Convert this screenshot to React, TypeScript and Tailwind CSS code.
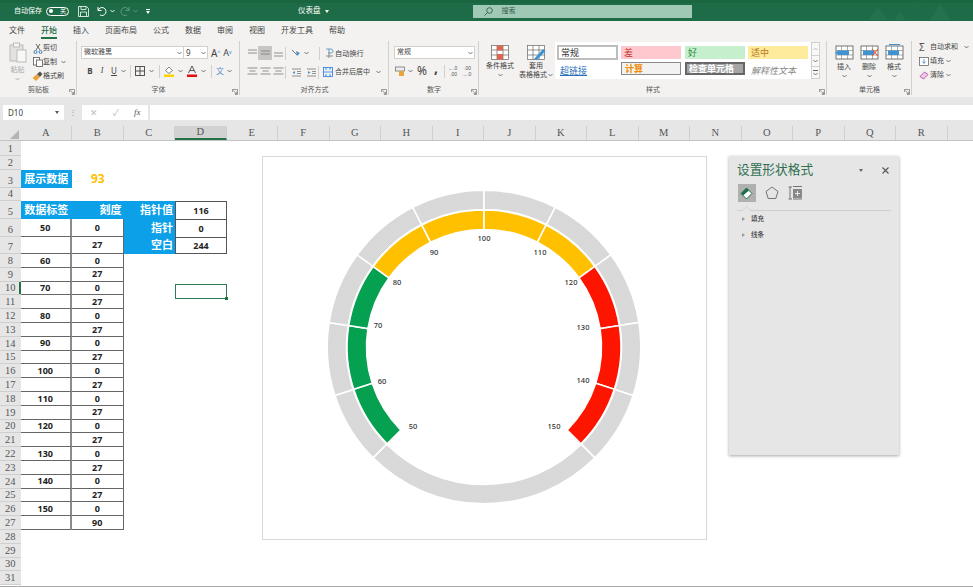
import type { ReactNode } from "react";

function Chev({ className = "" }: { className?: string }) {
  return (
    <svg className={"w-[5px] h-[4px] shrink-0 " + className} viewBox="0 0 5 4" fill="none" stroke="#666" strokeWidth="0.9">
      <path d="M0.5 1 L2.5 3 L4.5 1" />
    </svg>
  );
}

function Launcher() {
  return (
    <svg className="absolute right-[2px] bottom-[2px] w-[6px] h-[6px]" viewBox="0 0 6 6" fill="none" stroke="#777" strokeWidth="0.7">
      <path d="M0.5 3 V0.5 H5.5 V5.5 H3 M1 1.2 L4.6 4.8 M4.6 2.8 V4.8 H2.6" />
    </svg>
  );
}

function Group({ label, className, children }: { label: string; className: string; children: ReactNode }) {
  return (
    <div className={"relative flex flex-col shrink-0 " + className}>
      <div className="flex-1 min-h-0">{children}</div>
      <div className="h-[13px] mb-[1px] text-center text-[7px] leading-[13px] text-[#555]">{label}</div>
      <Launcher />
      <div className="absolute right-0 top-[3px] bottom-[2px] w-px bg-[#d2d0ce]" />
    </div>
  );
}

function Lines({ rows }: { rows: [number, number][] }) {
  return (
    <svg className="w-[11px] h-[10px]" viewBox="0 0 11 10" stroke="#777" strokeWidth="0.8">
      {rows.map(([y, w], i) => <line key={i} x1={(11 - w) / 2} x2={(11 + w) / 2} y1={y} y2={y} />)}
    </svg>
  );
}

function Sep({ className = "" }: { className?: string }) {
  return <div className={"w-px h-[13px] bg-[#d2d0ce] shrink-0 " + className} />;
}

function CellIcon({ kind }: { kind: "insert" | "delete" | "format" }) {
  return (
    <svg className="w-[19px] h-[16px]" viewBox="0 0 19 16" fill="none">
      <rect x="1" y="2" width="17" height="13" fill="#fff" stroke="#555" strokeWidth="0.8" />
      <path d="M1 6.5 H18 M1 11 H18 M6.5 2 V15 M12.5 2 V15" stroke="#777" strokeWidth="0.6" />
      <rect x="3" y="6.5" width="11" height="4.5" fill="#3f93d3" />
      {kind === "insert" && <path d="M0 8.7 L4 6 V11.4 Z" fill="#3f93d3" />}
      {kind === "delete" && <path d="M12 5 L18 12 M18 5 L12 12" stroke="#e05a3c" strokeWidth="1.1" />}
      {kind === "format" && <path d="M4 0.5 H15" stroke="#3f93d3" strokeWidth="1" />}
    </svg>
  );
}

function Ribbon() {
  return (
    <div className="flex h-[59px] bg-[#f3f2f1] text-[#444]">
      <Group label="剪贴板" className="w-[77px]">
        <div className="flex pt-[3px]">
          <div className="w-[33px] pl-[2px] flex flex-col items-center">
            <svg className="w-[18px] h-[21px] mt-[1px]" viewBox="0 0 18 21" fill="none">
              <rect x="1" y="3" width="13" height="16" fill="#e4e2e0" stroke="#bbb" />
              <rect x="4.5" y="1" width="6" height="4" fill="#f5f5f5" stroke="#bbb" />
              <rect x="8" y="8" width="9" height="12" fill="#f8f8f8" stroke="#bbb" />
            </svg>
            <span className="text-[7px] leading-[9px] mt-[2px] text-[#aaa]">粘贴</span>
            <Chev className="mt-[3px] opacity-50" />
          </div>
          <div className="flex flex-col text-[7px]">
            <div className="h-[14px] flex items-center">
              <svg className="w-[10px] h-[11px]" viewBox="0 0 10 11" fill="none" stroke="#3f7fb8" strokeWidth="1">
                <path d="M3 1 L7 7 M7 1 L3 7" stroke="#666" /><circle cx="2.5" cy="9" r="1.5" /><circle cx="7.5" cy="9" r="1.5" />
              </svg>
              <span>剪切</span>
            </div>
            <div className="h-[14px] flex items-center">
              <svg className="w-[10px] h-[10px]" viewBox="0 0 10 10" fill="#fff" stroke="#555" strokeWidth="0.8">
                <rect x="0.5" y="0.5" width="6" height="7.5" /><rect x="3.5" y="3" width="6" height="6.5" />
              </svg>
              <span>复制</span>
              <Chev className="ml-[4px]" />
            </div>
            <div className="h-[14px] flex items-center -ml-[1px]">
              <svg className="w-[11px] h-[10px]" viewBox="0 0 11 10" fill="none">
                <path d="M0.5 7 L5 3 L8 6 L4 10 Z" fill="#e8a33d" /><path d="M5 3 L8 0.5 L10.5 3 L8 6 Z" fill="#555" />
              </svg>
              <span>格式刷</span>
            </div>
          </div>
        </div>
      </Group>

      <Group label="字体" className="w-[163px]">
        <div className="pt-[8px] pl-[4px]">
          <div className="flex items-center h-[13px]">
            <div className="w-[103px] h-[13px] bg-white border border-[#d2d0ce] flex items-center justify-between pl-[2px] pr-[1px] text-[7px]">
              <span>微软雅黑</span><Chev />
            </div>
            <div className="w-[24px] h-[13px] bg-white border border-l-0 border-[#d2d0ce] flex items-center justify-between pl-[2px] pr-[1px] text-[8px]">
              <span>9</span><Chev />
            </div>
            <span className="ml-[3px] text-[10px] leading-none text-[#444]">A<sup className="text-[5px] text-[#2b7cd3]">^</sup></span>
            <span className="ml-[3px] text-[9px] leading-none text-[#444]">A<sup className="text-[5px] text-[#2b7cd3]">v</sup></span>
          </div>
          <div className="flex items-center h-[14px] mt-[5px] pl-[5px] text-[8px]">
            <span className="w-[8px] text-center font-bold">B</span>
            <span className="w-[8px] ml-[4px] text-center italic font-['Liberation_Serif',serif]">I</span>
            <span className="w-[8px] ml-[4px] text-center underline">U</span>
            <Chev className="ml-[3px]" />
            <Sep className="ml-[4px]" />
            <svg className="w-[10px] h-[10px] ml-[4px]" viewBox="0 0 10 10" fill="none" stroke="#444" strokeWidth="0.9">
              <rect x="0.5" y="0.5" width="9" height="9" /><path d="M5 0.5 V9.5 M0.5 5 H9.5" />
            </svg>
            <Chev className="ml-[4px]" />
            <Sep className="ml-[5px]" />
            <svg className="w-[10px] h-[12px] ml-[4px]" viewBox="0 0 10 12" fill="none">
              <path d="M1.5 5.5 L5 2 L8.5 5.5 L5 8.5 Z" fill="#fff" stroke="#666" strokeWidth="0.8" />
              <rect x="0" y="9.5" width="10" height="2.5" fill="#ffd400" />
            </svg>
            <Chev className="ml-[4px]" />
            <svg className="w-[10px] h-[12px] ml-[4px]" viewBox="0 0 10 12" fill="none">
              <path d="M1.5 8 L5 1 L8.5 8 M3 5.5 H7" stroke="#444" strokeWidth="0.9" />
              <rect x="0" y="9.5" width="10" height="2.5" fill="#e01010" />
            </svg>
            <Chev className="ml-[4px]" />
            <Sep className="ml-[5px]" />
            <span className="ml-[4px] text-[8px] text-[#5b8fc7]">文</span>
            <Chev className="ml-[3px]" />
          </div>
        </div>
      </Group>

      <Group label="对齐方式" className="w-[149px]">
        <div className="pt-[8px] pl-[7px]">
          <div className="flex items-center h-[14px]">
            <div className="w-[11px] flex justify-center"><Lines rows={[[2, 9], [5, 9]]} /></div>
            <div className="w-[14px] h-[14px] bg-[#c8c6c4] flex items-center justify-center"><Lines rows={[[3, 9], [6, 9]]} /></div>
            <div className="w-[12px] flex justify-center"><Lines rows={[[5, 9], [8, 9]]} /></div>
            <Sep className="ml-[1px]" />
            <svg className="w-[10px] h-[10px] ml-[5px]" viewBox="0 0 10 10" fill="none" stroke="#777">
              <path d="M1 2 L6 7" /><path d="M5 3 L9 5 L6 8 Z" fill="#3f93d3" stroke="none" />
            </svg>
            <Chev className="ml-[3px]" />
            <Sep className="ml-[10px]" />
            <svg className="w-[9px] h-[11px] ml-[5px]" viewBox="0 0 9 11" fill="none" stroke="#777" strokeWidth="0.8">
              <path d="M1 1 H6 A2 2 0 0 1 6 5 H3" stroke="#3f93d3" /><path d="M1 8 H8 M4 1 V10" />
            </svg>
            <span className="ml-[1px] text-[7.2px]">自动换行</span>
          </div>
          <div className="flex items-center h-[14px] mt-[5px]">
            <div className="w-[11px] flex justify-center"><Lines rows={[[1, 10], [4, 6], [7, 10]]} /></div>
            <div className="w-[14px] flex justify-center"><Lines rows={[[1, 10], [4, 6], [7, 10]]} /></div>
            <div className="w-[12px] flex justify-center"><Lines rows={[[1, 10], [4, 6], [7, 10]]} /></div>
            <Sep className="ml-[1px]" />
            <svg className="w-[9px] h-[9px] ml-[6px]" viewBox="0 0 9 9" fill="none" stroke="#777" strokeWidth="0.8">
              <path d="M0 1 H9 M5 3.5 H9 M5 5.5 H9 M0 8 H9" /><path d="M3 3 L0.5 4.5 L3 6 Z" fill="#3f93d3" stroke="none" />
            </svg>
            <svg className="w-[9px] h-[9px] ml-[6px]" viewBox="0 0 9 9" fill="none" stroke="#777" strokeWidth="0.8">
              <path d="M0 1 H9 M5 3.5 H9 M5 5.5 H9 M0 8 H9" /><path d="M1 3 L3.5 4.5 L1 6 Z" fill="#3f93d3" stroke="none" />
            </svg>
            <Sep className="ml-[2px]" />
            <svg className="w-[10px] h-[10px] ml-[4px]" viewBox="0 0 10 10" fill="#eaf3fb" stroke="#2b7cd3" strokeWidth="0.8">
              <rect x="0.5" y="0.5" width="9" height="9" /><path d="M0.5 5 H9.5 M3 0.5 V3 M7 0.5 V3 M3 7 V9.5 M7 7 V9.5" />
            </svg>
            <span className="ml-[2px] text-[7px]">合并后居中</span>
            <Chev className="ml-[6px]" />
          </div>
        </div>
      </Group>

      <Group label="数字" className="w-[90px]">
        <div className="pt-[8px] pl-[5px]">
          <div className="w-[81px] h-[13px] bg-white border border-[#d2d0ce] flex items-center justify-between pl-[2px] pr-[1px] text-[7px]">
            <span>常规</span><Chev />
          </div>
          <div className="flex items-center h-[14px] mt-[5px] pl-[1px]">
            <svg className="w-[10px] h-[10px]" viewBox="0 0 10 10" fill="none">
              <rect x="0.5" y="1" width="9" height="4" fill="#eee" stroke="#666" strokeWidth="0.7" />
              <rect x="4" y="5" width="5" height="5" fill="#e8a33d" />
            </svg>
            <Chev className="ml-[3px]" />
            <span className="ml-[4px] w-[11px] text-[12px] leading-none">%</span>
            <span className="ml-[6px] w-[4px] -mt-[6px] text-[14px] leading-none font-bold">,</span>
            <Sep className="ml-[6px]" />
            <div className="ml-[3px] w-[11px] flex flex-col text-[5px] leading-[6px] text-[#555] font-['Liberation_Sans',sans-serif]">
              <span className="h-[6px]"><span className="text-[#2b7cd3]">←</span>.0</span>
              <span className="h-[6px] pl-[2px]">.00</span>
            </div>
            <div className="ml-[3px] w-[11px] flex flex-col text-[5px] leading-[6px] text-[#555] font-['Liberation_Sans',sans-serif]">
              <span className="h-[6px] pl-[2px]">.00</span>
              <span className="h-[6px]"><span className="text-[#2b7cd3]">→</span>.0</span>
            </div>
          </div>
        </div>
      </Group>

      <Group label="样式" className="w-[348px]">
        <div className="flex pt-[4px] pl-[5px]">
          <div className="w-[32px] flex flex-col items-center text-[7px] leading-[9px]">
            <svg className="w-[18px] h-[15px] mt-[3px]" viewBox="0 0 18 15" fill="#fff" stroke="#666" strokeWidth="0.7">
              <rect x="0.5" y="0.5" width="17" height="14" />
              <path d="M0.5 5 H17.5 M0.5 10 H17.5 M6 0.5 V14.5 M12 0.5 V14.5" />
              <rect x="6" y="0.5" width="6" height="5" fill="#e0654f" stroke="none" />
              <rect x="6" y="9" width="6" height="5.5" fill="#e0654f" stroke="none" />
            </svg>
            <span className="mt-[1px]">条件格式</span>
            <Chev className="mt-[3px]" />
          </div>
          <div className="w-[38px] flex flex-col items-center text-[7px] leading-[9px] ml-[1px]">
            <svg className="w-[19px] h-[15px] mt-[3px]" viewBox="0 0 19 15" fill="#fff" stroke="#666" strokeWidth="0.7">
              <rect x="0.5" y="0.5" width="17" height="14" />
              <path d="M0.5 5 H17.5 M0.5 10 H17.5 M6 0.5 V14.5 M12 0.5 V14.5" />
              <path d="M7 14 L16 4 L18.5 6 L10 15 Z" fill="#3f93d3" stroke="none" />
            </svg>
            <span className="mt-[1px]">套用</span>
            <span className="flex items-center gap-[1px] whitespace-nowrap">表格格式<Chev /></span>
          </div>
          <div className="w-[256px] h-[37px] bg-white grid grid-cols-[64px_64px_63px_63px] grid-rows-[20px_17px] pl-[2px] text-[9px] leading-none">
            <div className="h-[15px] mt-[3px] mr-[3px] border-2 border-[#bdbdbd] flex items-center pl-[2px] text-[#333]">常规</div>
            <div className="h-[13px] mt-[4px] mr-[4px] bg-[#ffc7ce] flex items-center pl-[3px] text-[#c0392b]">差</div>
            <div className="h-[13px] mt-[4px] mr-[3px] bg-[#c6efce] flex items-center pl-[3px] text-[#2d8a3e]">好</div>
            <div className="h-[13px] mt-[4px] mr-[3px] bg-[#ffeb9c] flex items-center pl-[3px] text-[#b7791f]">适中</div>
            <div className="flex items-center pl-[3px] text-[#2b70b8] underline">超链接</div>
            <div className="h-[13px] mr-[4px] bg-[#f2f2f2] border border-[#8a8a8a] flex items-center pl-[3px] text-[#f08a00] font-bold">计算</div>
            <div className="h-[13px] mr-[3px] bg-[#a5a5a5] border-2 border-[#666] flex items-center pl-[2px] text-white font-bold">检查单元格</div>
            <div className="flex items-center pl-[3px] italic text-[#888] font-['Noto_Sans_CJK_SC',serif]">解释性文本</div>
          </div>
          <div className="w-[9px] h-[37px] flex flex-col border border-[#d2d0ce] bg-[#f8f8f8]">
            <div className="h-[13px] flex items-center justify-center border-b border-[#d2d0ce]"><Chev className="rotate-180 opacity-40" /></div>
            <div className="h-[11px] flex items-center justify-center border-b border-[#d2d0ce]"><Chev /></div>
            <div className="flex-1 flex flex-col items-center justify-center gap-[1px]"><div className="w-[5px] h-px bg-[#666]" /><Chev /></div>
          </div>
        </div>
      </Group>

      <Group label="单元格" className="w-[85px]">
        <div className="flex pt-[6px] pl-[4.5px] text-[7px] leading-[9px]">
          {([["插入", "insert"], ["删除", "delete"], ["格式", "format"]] as const).map(([t, k]) => (
            <div key={t} className="w-[25px] flex flex-col items-center">
              <CellIcon kind={k} />
              <span className="mt-[2px]">{t}</span>
              <Chev className="mt-[3px]" />
            </div>
          ))}
        </div>
      </Group>

      <div className="flex-1 pt-[2px] pl-[7px] text-[7px]">
        <div className="h-[14px] flex items-center">
          <span className="w-[11px] text-[10px] leading-none text-[#555]">Σ</span>
          <span className="whitespace-nowrap">自动求和</span>
          <Chev className="ml-[6px]" />
        </div>
        <div className="h-[14px] flex items-center">
          <svg className="w-[10px] h-[9px] mr-[1px]" viewBox="0 0 10 9" fill="#fff" stroke="#555" strokeWidth="0.7">
            <rect x="0.5" y="0.5" width="9" height="8" /><path d="M5 2 V6 M3.5 4.5 L5 6.5 L6.5 4.5" stroke="#2b7cd3" />
          </svg>
          <span>填充</span>
          <Chev className="ml-[2px]" />
        </div>
        <div className="h-[14px] flex items-center">
          <svg className="w-[10px] h-[9px] mr-[1px]" viewBox="0 0 10 9" fill="#f2c8e4" stroke="#a855a8" strokeWidth="0.9">
            <path d="M1 5.5 L5.5 1 L9 3.5 L4.5 8 Z" />
          </svg>
          <span>清除</span>
          <Chev className="ml-[2px]" />
        </div>
      </div>
    </div>
  );
}

const COLS = ["A", "B", "C", "D", "E", "F", "G", "H", "I", "J", "K", "L", "M", "N", "O", "P", "Q", "R"];
const CX = 221;
const CY = 190;

function pt(r: number, deg: number) {
  const a = (deg * Math.PI) / 180;
  return (CX + r * Math.sin(a)).toFixed(2) + " " + (CY - r * Math.cos(a)).toFixed(2);
}

function arc(r1: number, r2: number, a0: number, a1: number) {
  const large = a1 - a0 > 180 ? 1 : 0;
  return "M" + pt(r2, a0) + " A" + r2 + " " + r2 + " 0 " + large + " 1 " + pt(r2, a1) + " L" + pt(r1, a1) + " A" + r1 + " " + r1 + " 0 " + large + " 0 " + pt(r1, a0) + " Z";
}

const TICKS = [-135, -108, -81, -54, -27, 0, 27, 54, 81, 108, 135];
const GAUGE_LABELS: [string, number, number][] = [
  ["50", 413, 426], ["60", 382, 381], ["70", 378, 325], ["80", 397, 282], ["90", 434, 252], ["100", 484, 238],
  ["110", 540, 252], ["120", 571, 282], ["130", 583, 327], ["140", 583, 380], ["150", 554, 426],
];

function Gauge() {
  const fill = (i: number) => (i < 3 ? "#05a050" : i < 7 ? "#ffc000" : "#fe1500");
  return (
    <svg className="w-[443px] h-[382px]" viewBox="0 0 443 382">
      <defs>
        <pattern id="hatch" width="2" height="2" patternUnits="userSpaceOnUse">
          <rect width="2" height="2" fill="#dcdcdc" />
          <rect width="1" height="1" fill="#d5d5d5" />
          <rect x="1" y="1" width="1" height="1" fill="#d5d5d5" />
        </pattern>
      </defs>
      {TICKS.slice(0, -1).map((a, i) => (
        <path key={a} d={arc(137.5, 156.8, a, TICKS[i + 1])} fill="url(#hatch)" stroke="#fff" strokeWidth="1.6" />
      ))}
      <path d={arc(137.5, 156.8, 135, 225)} fill="url(#hatch)" stroke="#fff" strokeWidth="1.6" />
      {TICKS.slice(0, -1).map((a, i) => (
        <path key={a} d={arc(117.5, 137, a, TICKS[i + 1])} fill={fill(i)} stroke="#fff" strokeWidth="1.6" />
      ))}
      {GAUGE_LABELS.map(([t, x, y]) => (
        <text key={t} x={x - 263} y={y - 157 + 3} textAnchor="middle" fontSize="7.5" fontWeight="500" fill="#333" fontFamily="Noto Sans, sans-serif">{t}</text>
      ))}
    </svg>
  );
}

type Row = { n: number; h: string; a?: string; b?: string; c?: string; d?: string; table?: boolean };

const ROWS: Row[] = [
  { n: 1, h: "h-[14.5px]" },
  { n: 2, h: "h-[14.5px]" },
  { n: 3, h: "h-[18px]" },
  { n: 4, h: "h-[13px]" },
  { n: 5, h: "h-[18px]" },
  { n: 6, h: "h-[17.5px]", a: "50", b: "0", c: "指针", d: "0", table: true },
  { n: 7, h: "h-[17.5px]", b: "27", c: "空白", d: "244", table: true },
];
for (let n = 8; n <= 31; n++) {
  if (n > 27) ROWS.push({ n, h: "h-[13.8px]" });
  else if (n % 2 === 0) ROWS.push({ n, h: "h-[13.8px]", a: String(60 + (n - 8) * 5), b: "0", table: true });
  else ROWS.push({ n, h: "h-[13.8px]", b: n === 27 ? "90" : "27", table: true });
}

function SheetRow({ row }: { row: Row }) {
  const cell = "w-[51.5px] shrink-0 flex items-center justify-center text-[9px] font-bold text-[#222]";
  let a = <div className="w-[51.5px] shrink-0" />;
  let b = <div className="w-[51.5px] shrink-0" />;
  let c = <div className="w-[51.5px] shrink-0" />;
  let d = <div className="w-[52px] shrink-0" />;
  if (row.n === 3) {
    a = <div className="w-[51.5px] shrink-0 bg-[#0ba0e8] flex items-center justify-center text-[11px] font-bold text-white whitespace-nowrap">展示数据</div>;
    b = <div className="w-[51.5px] shrink-0 flex items-center justify-center text-[12px] font-bold text-[#ffc000]">93</div>;
  }
  if (row.n === 5) {
    const head = "w-[51.5px] shrink-0 bg-[#0ba0e8] flex items-center text-[11px] font-bold text-white whitespace-nowrap";
    a = <div className={head + " justify-center"}>数据标签</div>;
    b = <div className={head + " justify-end pr-[2px]"}>刻度</div>;
    c = <div className={head + " justify-end pr-[2px]"}>指针值</div>;
    d = <div className={cell + " w-[52px] border border-[#555] border-b-0"}>116</div>;
  }
  if (row.table) {
    a = <div className={cell + " border-b border-r-2 border-b-[#666] border-r-[#8c8c8c]"}>{row.a}</div>;
    b = <div className={cell + " border-b border-r border-[#666]"}>{row.b}</div>;
  }
  if (row.c) {
    c = <div className="w-[51.5px] shrink-0 bg-[#0ba0e8] flex items-center justify-end pr-[2px] text-[11px] font-bold text-white whitespace-nowrap">{row.c}</div>;
    d = <div className={cell + " w-[52px] border-l border-r border-t border-[#555] " + (row.n === 7 ? "border-b" : "")}>{row.d}</div>;
  }
  return (
    <div className={"flex " + row.h}>
      <div className="relative w-[20.5px] shrink-0 bg-[#e6e6e6] border-b border-[#cfcfcf] flex items-end justify-center text-[10.5px] leading-[13px] text-[#555] font-['Liberation_Serif',serif]">
        {row.n}
        {row.n === 10 && <div className="absolute right-0 top-0 bottom-0 w-[1.5px] bg-[#217346]" />}
      </div>
      {a}{b}{c}{d}
    </div>
  );
}

export default function App() {
  return (
    <div className="relative w-[973px] h-[587px] overflow-hidden bg-white font-['Noto_Sans','Noto_Sans_CJK_SC',sans-serif]">
      {/* title bar */}
      <div className="relative h-[21px] flex items-center text-white text-[7px] border-t-[3px] border-[#196640] bg-[#1e6c47]">
        <span className="ml-[14px] -mt-[2px]">自动保存</span>
        <div className="ml-[4px] -mt-[2px] w-[23px] h-[9px] rounded-full border border-white flex items-center justify-between px-[2px]">
          <div className="w-[4px] h-[4px] rounded-full bg-white" />
          <span className="text-[6px] leading-none">关</span>
        </div>
        <svg className="ml-[9px] -mt-[2px] w-[11px] h-[11px]" viewBox="0 0 11 11" fill="none" stroke="#e5efe9" strokeWidth="0.9">
          <path d="M0.5 0.5 H8.5 L10.5 2.5 V10.5 H0.5 Z M3 0.5 V3.5 H8 V0.5 M2.5 10.5 V6 H8.5 V10.5" />
        </svg>
        <svg className="ml-[8px] -mt-[2px] w-[10px] h-[10px]" viewBox="0 0 10 10" fill="none" stroke="#fff" strokeWidth="1">
          <path d="M1 1 V4.5 H4.5 M1.2 4.3 A4 4 0 1 1 3 9" />
        </svg>
        <Chev className="ml-[3px] -mt-[2px] [&_path]:stroke-white" />
        <svg className="ml-[5px] -mt-[2px] w-[10px] h-[10px] opacity-30" viewBox="0 0 10 10" fill="none" stroke="#fff" strokeWidth="1">
          <path d="M9 1 V4.5 H5.5 M8.8 4.3 A4 4 0 1 0 7 9" />
        </svg>
        <Chev className="ml-[3px] -mt-[2px] opacity-30 [&_path]:stroke-white" />
        <div className="ml-[8px] -mt-[2px] flex flex-col items-center gap-[1px]">
          <div className="w-[4px] h-px bg-white" />
          <div className="w-0 h-0 border-l-[2px] border-r-[2px] border-t-[3px] border-l-transparent border-r-transparent border-t-white" />
        </div>
        <span className="ml-[148px] -mt-[2px] text-[7.5px]">仪表盘</span>
        <div className="ml-[4px] -mt-[2px] w-0 h-0 border-l-[2px] border-r-[2px] border-t-[3px] border-l-transparent border-r-transparent border-t-white" />
        <div className="ml-[144px] -mt-[2px] w-[219px] h-[13px] bg-[#9fc9b4] flex items-center text-[7px] text-[#35604b]">
          <svg className="ml-[11px] w-[9px] h-[9px]" viewBox="0 0 9 9" fill="none" stroke="#35604b" strokeWidth="0.9">
            <circle cx="5.5" cy="3.5" r="2.8" /><path d="M3.5 5.5 L0.5 8.5" />
          </svg>
          <span className="ml-[9px]">搜索</span>
        </div>
        <svg className="absolute right-0 top-[-3px] w-[105px] h-[20px] opacity-40" viewBox="0 0 105 20" fill="#2f7a57" stroke="#2f7a57" strokeWidth="0.5">
          <path d="M0 20 L10 8 L20 20 Z M26 20 L32 12 L38 20 Z M62 20 L72 4 L82 20 Z" />
          <path fill="none" d="M44 4 L54 0 L64 6 L60 16 L48 16 Z M84 2 L94 8 L104 2 M90 18 L98 12 L105 18" />
        </svg>
      </div>

      {/* tabs */}
      <div className="h-[17px] bg-[#f3f2f1] flex items-center pl-[9px] gap-[16px] text-[8px] text-[#444]">
        {["文件", "开始", "插入", "页面布局", "公式", "数据", "审阅", "视图", "开发工具", "帮助"].map((t) => (
          <span key={t} className={"relative " + (t === "开始" ? "text-[#1e6c47] font-medium" : "")}>
            {t}
            {t === "开始" && <span className="absolute left-0 right-0 -bottom-[3px] h-[1.5px] bg-[#217346]" />}
          </span>
        ))}
      </div>

      <Ribbon />

      {/* formula bar */}
      <div className="h-[29px] bg-[#e6e6e6] pt-[8px] flex items-start text-[8px] text-[#444]">
        <div className="ml-[3px] w-[61px] h-[15px] bg-white flex items-center justify-between pl-[5px] pr-[5px]">
          <span>D10</span>
          <div className="w-0 h-0 border-l-[2px] border-r-[2px] border-t-[3px] border-l-transparent border-r-transparent border-t-[#555]" />
        </div>
        <span className="w-[18px] text-center leading-[14px] text-[#999]">⋮</span>
        <div className="w-[66px] h-[15px] bg-white flex items-center justify-around text-[9px] text-[#bbb]">
          <span>✕</span><span>✓</span><span className="italic text-[#555] font-['Liberation_Serif',serif]">fx</span>
        </div>
        <div className="ml-[2px] flex-1 h-[15px] bg-white" />
      </div>

      {/* column headers */}
      <div className="flex h-[15px] bg-[#e6e6e6] border-b border-[#c4c4c4]">
        <div className="w-[20.5px] shrink-0 flex items-end justify-end pr-[2px] pb-[1px]">
          <div className="w-0 h-0 border-l-[9px] border-b-[9px] border-l-transparent border-b-[#b4b4b4]" />
        </div>
        {COLS.map((c) => (
          <div key={c} className={"w-[51.5px] shrink-0 flex items-center justify-center text-[10.5px] text-[#555] border-r border-[#cfcfcf] font-['Liberation_Serif',serif] " + (c === "D" ? "bg-[#d2d2d2] border-b-2 border-b-[#217346]" : "")}>
            {c}
          </div>
        ))}
      </div>

      {/* sheet */}
      <div className="relative">
        {ROWS.map((r) => <SheetRow key={r.n} row={r} />)}

        <div className="absolute left-[175px] top-[143px] w-[52px] h-[15px] border-[1.5px] border-[#2f7a57]">
          <div className="absolute -right-[2px] -bottom-[2px] w-[3px] h-[3px] bg-[#217346]" />
        </div>

        <div className="absolute left-[262px] top-[15px] border border-[#d9d9d9] bg-white w-[445px] h-[384px]">
          <Gauge />
        </div>

        <div className="absolute left-[729px] top-[15px] w-[170px] h-[299px] bg-[#e6e6e6] shadow-[0_1px_3px_rgba(0,0,0,0.35)] text-[#444]">
          <div className="flex items-center h-[28px] pl-[8px] text-[12.7px] text-[#2f6f50]">
            <span>设置形状格式</span>
            <div className="ml-[46px] w-0 h-0 border-l-[2.5px] border-r-[2.5px] border-t-[3px] border-l-transparent border-r-transparent border-t-[#666]" />
            <svg className="ml-[19px] w-[7px] h-[7px]" viewBox="0 0 7 7" stroke="#555" strokeWidth="1.1"><path d="M0.5 0.5 L6.5 6.5 M6.5 0.5 L0.5 6.5" /></svg>
          </div>
          <div className="flex items-center h-[18px] pl-[9px]">
            <div className="w-[18px] h-[18px] bg-[#b0b0b0] flex items-center justify-center">
              <svg className="w-[14px] h-[13px]" viewBox="0 0 14 13">
                <path d="M1 6.5 L6.5 1 L12 6.5 L6.5 12 Z" fill="#fff" stroke="#1e6c47" strokeWidth="1" />
                <path d="M1 6.5 L6.5 1 L9 3.5 L3 8.5 Z" fill="#1e6c47" />
              </svg>
            </div>
            <svg className="ml-[9px] w-[14px] h-[14px]" viewBox="0 0 14 14" fill="none" stroke="#666" strokeWidth="0.9">
              <path d="M7 1 L13 5.5 L10.8 12.5 H3.2 L1 5.5 Z" />
            </svg>
            <svg className="ml-[9px] w-[15px] h-[14px]" viewBox="0 0 15 14" fill="none" stroke="#666" strokeWidth="0.9">
              <path d="M0.5 1 H4 M0.5 13 H4 M2 1 V13 M5 0.5 H14 M5 13 H14" /><rect x="5" y="3" width="9" height="9" fill="#888" stroke="none" />
              <path d="M9.5 5 V10 M7 7.5 H12" stroke="#fff" strokeWidth="0.8" />
            </svg>
          </div>
          <div className="relative mx-[8px] mt-[8px] h-px bg-[#cfcfcf]">
            <svg className="absolute left-[5px] -top-[4px] w-[9px] h-[5px]" viewBox="0 0 9 5" fill="#e6e6e6" stroke="#cfcfcf" strokeWidth="0.8">
              <path d="M0 5 L4.5 0.5 L9 5" />
            </svg>
          </div>
          <div className="pl-[13px] text-[6.5px] font-medium">
            <div className="h-[16px] flex items-center gap-[6px]">
              <div className="w-0 h-0 border-y-[2.5px] border-l-[3px] border-y-transparent border-l-[#999]" />
              <span>填充</span>
            </div>
            <div className="h-[16px] flex items-center gap-[6px]">
              <div className="w-0 h-0 border-y-[2.5px] border-l-[3px] border-y-transparent border-l-[#999]" />
              <span>线条</span>
            </div>
          </div>
        </div>
      </div>
      <div className="absolute left-0 right-0 bottom-0 h-px bg-[#a8a8a8]" />
    </div>
  );
}
